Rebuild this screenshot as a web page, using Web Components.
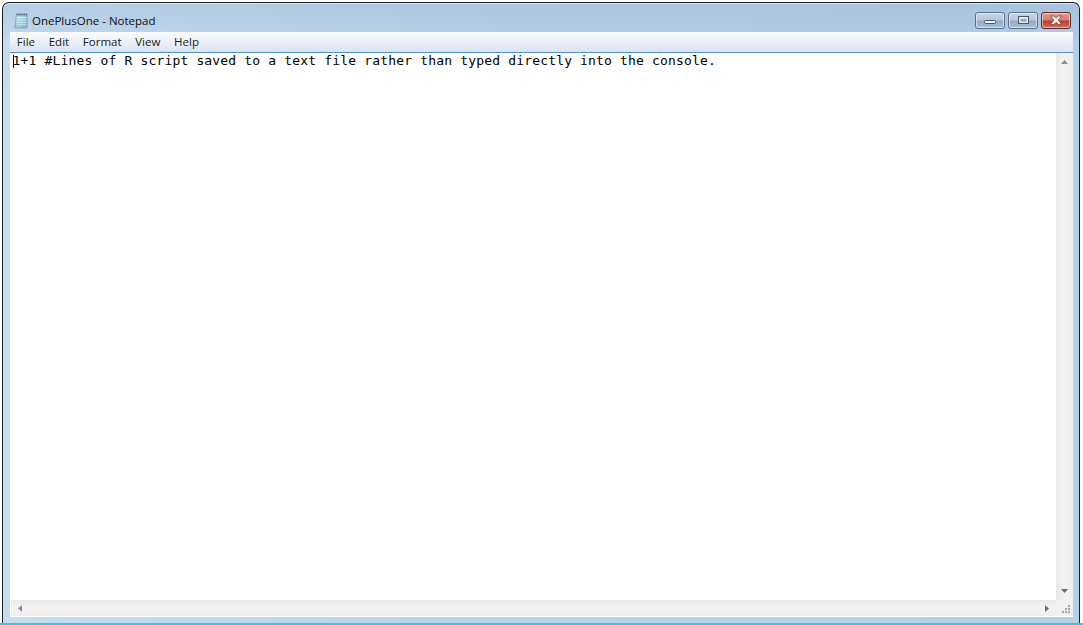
<!DOCTYPE html>
<html>
<head>
<meta charset="utf-8">
<title>OnePlusOne - Notepad</title>
<style>
  html, body { margin: 0; height: 100%; background: #fff; }
  body { overflow: hidden; }
</style>
</head>
<body>
<notepad-window title-text="OnePlusOne - Notepad">
  <menu-item>File</menu-item>
  <menu-item>Edit</menu-item>
  <menu-item>Format</menu-item>
  <menu-item>View</menu-item>
  <menu-item>Help</menu-item>
  <text-area slot="body">1+1 #Lines of R script saved to a text file rather than typed directly into the console.</text-area>
</notepad-window>

<script>
class CaptionButton extends HTMLElement {
  connectedCallback() {
    const kind = this.getAttribute('kind');
    const glyphs = {
      min: '<rect x="1.500" y="5.500" width="11" height="3" rx="1" fill="#eef1f4" stroke="#4a5663"/>',
      max: '<rect x="2.500" y="1.500" width="10" height="7" fill="#dfe7ef" stroke="#4a5663"/><rect x="4.500" y="4" width="6" height="2.500" fill="#8fa9c4"/>',
      close: '<path d="M1.500 1h3.500l2.200 2 2.200-2h3.300l-3.500 4 3.500 4.500h-3.300l-2.200-2.200-2.200 2.200H1.500l3.500-4.500z" fill="#f4f1f0" stroke="#6b3a38" stroke-width=".7"/>'
    };
    this.attachShadow({ mode: 'open' });
    this.shadowRoot.innerHTML = `
      <style>
        :host {
          display: flex;
          align-items: center;
          justify-content: center;
          width: 30px;
          height: 17px;
          box-sizing: border-box;
          border: 1px solid #5d7288;
          border-radius: 3px;
          background: linear-gradient(#c5d6e7 0%, #b4c9de 48%, #8fa9c4 52%, #a9c4dc 100%);
          box-shadow: inset 0 0 0 1px rgba(255,255,255,.5);
        }
        :host([kind="close"]) {
          border-color: #5f2a2c;
          background: linear-gradient(#dd9d90 0%, #d17f70 48%, #b93a2b 52%, #cf7160 100%);
        }
        svg { display: block; }
      </style>
      <svg width="15" height="11" viewBox="0 0 15 11">${glyphs[kind]}</svg>
    `;
  }
}

class MenuItem extends HTMLElement {
  constructor() {
    super();
    this.attachShadow({ mode: 'open' });
    this.shadowRoot.innerHTML = `
      <style>
        :host {
          display: block;
          font: 11.5px "Open Sans", sans-serif;
          color: #1a1a1a;
          line-height: 20px;
          padding: 0 6.85px;
        }
      </style>
      <slot></slot>
    `;
  }
}

class TextArea extends HTMLElement {
  constructor() {
    super();
    this.attachShadow({ mode: 'open' });
    this.shadowRoot.innerHTML = `
      <style>
        :host {
          display: block;
          flex: 1;
          position: relative;
          background: #fff;
          padding: 0 0 0 1.5px;
          font: 13px/15px "DejaVu Sans Mono", monospace;
          letter-spacing: .168px;
          color: #000;
        }
        .line { white-space: pre; }
        .caret {
          position: absolute;
          left: 2px;
          top: 2px;
          width: 1px;
          height: 13px;
          background: #000;
        }
      </style>
      <span class="caret"></span>
      <div class="line"><slot></slot></div>
    `;
  }
}

class ScrollBar extends HTMLElement {
  connectedCallback() {
    const vertical = this.getAttribute('dir') === 'v';
    this.attachShadow({ mode: 'open' });
    this.shadowRoot.innerHTML = `
      <style>
        :host {
          display: flex;
          flex-direction: ${vertical ? 'column' : 'row'};
          justify-content: space-between;
          align-items: center;
          box-sizing: border-box;
          background: ${vertical ? 'linear-gradient(90deg, #e9e9e9, #f3f3f3 50%, #eeeeee)' : 'linear-gradient(#e9e9e9, #f3f3f3 50%, #eeeeee)'};
          ${vertical ? 'width: 17px; padding: 7px 0;' : 'height: 16px; flex: 1; padding: 0 7px;'}
        }
        svg { display: block; }
      </style>
      ${vertical
        ? `<svg width="7" height="4" viewBox="0 0 7 4"><path d="M3.500 0L7 4H0z" fill="#8a8e94"/></svg>
           <svg width="7" height="4" viewBox="0 0 7 4"><path d="M0 0h7L3.500 4z" fill="#6a6e73"/></svg>`
        : `<svg width="4" height="7" viewBox="0 0 4 7"><path d="M4 0v7L0 3.500z" fill="#8a8e94"/></svg>
           <svg width="4" height="7" viewBox="0 0 4 7"><path d="M0 0v7l4-3.500z" fill="#6a6e73"/></svg>`}
    `;
  }
}

class NotepadWindow extends HTMLElement {
  connectedCallback() {
    const title = this.getAttribute('title-text') || '';
    this.attachShadow({ mode: 'open' });
    this.shadowRoot.innerHTML = `
      <style>
        :host {
          display: block;
          height: 625px;
          box-sizing: border-box;
          padding: 2px 3px 0 2px;
          background: #fff;
          border-bottom: 2px solid #3fc4d8;
        }
        .frame {
          height: 100%;
          box-sizing: border-box;
          display: flex;
          flex-direction: column;
          border: 1px solid #1b2126;
          border-bottom: 0;
          border-radius: 7px 7px 0 0;
          background:
            linear-gradient(rgba(120,150,185,.22) 0, rgba(120,150,185,.1) 30px, rgba(120,150,185,0) 40px),
            linear-gradient(90deg, #c6ddf0 0%, #b7d2ea 50%, #b4cfe8 100%);
          padding: 0 6px 6px 7px;
          box-shadow: inset 0 1px 0 rgba(255,255,255,.6);
        }
        .titlebar {
          display: flex;
          align-items: flex-end;
          height: 29px;
          flex: none;
          box-sizing: border-box;
          padding: 0 2px 3px 4px;
          font: 11.5px/17px "Open Sans", sans-serif;
          color: #0e0e0e;
        }
        .titlebar svg { margin-right: 4px; flex: none; }
        .name { flex: 1; position: relative; }
        .buttons { display: flex; gap: 3px; }
        .menu {
          display: flex;
          flex: none;
          height: 20px;
          background: linear-gradient(#fafcfe 0%, #eef2f9 40%, #dbe3f2 100%);
          border-bottom: 1px solid #4f8fc4;
        }
        .main {
          flex: 1;
          min-height: 0;
          display: flex;
          background: #fff;
          border-left: 1px solid #fff;
        }
        .main ::slotted(*) { flex: 1; }
        .bottom {
          display: flex;
          flex: none;
          border-left: 1px solid #fff;
          border-bottom: 1px solid #fff;
        }
        .grip {
          width: 17px;
          height: 16px;
          background: #f0f0f0;
        }
        .grip svg { display: block; }
      </style>
      <div class="frame">
        <div class="titlebar">
          <svg width="14" height="16" viewBox="0 0 15 17">
            <defs>
              <linearGradient id="pad" x1="0" y1="0" x2="1" y2="1">
                <stop offset="0" stop-color="#c2e3e8"/>
                <stop offset="1" stop-color="#6fb5cf"/>
              </linearGradient>
            </defs>
            <path d="M2.500 1.500h11.500v14.500h-13z" fill="url(#pad)" stroke="#8ba6b4"/>
            <path d="M3 5h10M3 7.500h10M3 10h10M3 12.500h10" stroke="#e6f4f6" stroke-width=".8"/>
            <path d="M3 1.500h11" stroke="#4b5a63" stroke-width="2" stroke-dasharray="1 1"/>
          </svg>
          <span class="name">${title}</span>
          <div class="buttons">
            <caption-button kind="min"></caption-button>
            <caption-button kind="max"></caption-button>
            <caption-button kind="close"></caption-button>
          </div>
        </div>
        <div class="menu"><slot></slot></div>
        <div class="main">
          <slot name="body"></slot>
          <scroll-bar dir="v"></scroll-bar>
        </div>
        <div class="bottom">
          <scroll-bar dir="h"></scroll-bar>
          <div class="grip">
            <svg width="17" height="16" viewBox="0 0 17 16" fill="#a3a7ac">
              <rect x="12" y="5" width="2" height="2"/>
              <rect x="9" y="8" width="2" height="2"/><rect x="12" y="8" width="2" height="2"/>
              <rect x="6" y="11" width="2" height="2"/><rect x="9" y="11" width="2" height="2"/><rect x="12" y="11" width="2" height="2"/>
            </svg>
          </div>
        </div>
      </div>
    `;
  }
}

customElements.define('caption-button', CaptionButton);
customElements.define('menu-item', MenuItem);
customElements.define('text-area', TextArea);
customElements.define('scroll-bar', ScrollBar);
customElements.define('notepad-window', NotepadWindow);
</script>
</body>
</html>
